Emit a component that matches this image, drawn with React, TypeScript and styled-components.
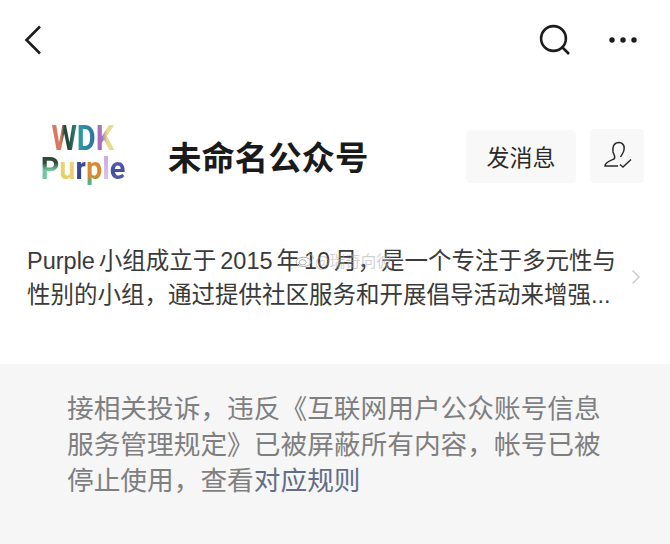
import styled, { createGlobalStyle } from "styled-components";

const GlobalStyle = createGlobalStyle`
  html, body {
    margin: 0;
    padding: 0;
    background: #fff;
  }
  body {
    font-family: "Liberation Sans", "Noto Sans CJK SC", sans-serif;
  }
`;

const LOGO_TOP = [
  { ch: "W", fill: "90deg, #d9775f 0%, #d9775f 38%, #24483c 50%, #24483c 66%, #2f8f88 100%" },
  { ch: "D", fill: "90deg, #2a9fa6 0%, #2f6f9f 100%" },
  { ch: "K", fill: "90deg, #a86fc0 0%, #a86fc0 35%, #e8dc8a 60%, #e8dc8a 100%" },
];

const LOGO_BOTTOM = [
  { ch: "P", fill: "180deg, #2d4a3a 0%, #2d4a3a 25%, #6fc8a0 45%, #6fc8a0 100%" },
  { ch: "u", fill: "180deg, #e8d880 0%, #e8c860 100%" },
  { ch: "r", fill: "180deg, #3f4f9f 0%, #2f3f80 100%" },
  { ch: "p", fill: "180deg, #d98a30 0%, #d98a30 60%, #4fb080 75%, #6fc8a0 100%" },
  { ch: "l", fill: "180deg, #c8a8e0 0%, #e0d0ec 100%" },
  { ch: "e", fill: "180deg, #7a5fc0 0%, #3f4f9f 50%, #8a6fd0 100%" },
];

export default function App() {
  return (
    <Page>
      <GlobalStyle />
      <NavBar>
        <IconButton aria-label="返回">
          <svg width="20" height="32" viewBox="0 0 20 32" fill="none">
            <path d="M17 2.5 L3.5 16 L17 29.5" stroke="#1c1c1c" strokeWidth="2.6" />
          </svg>
        </IconButton>
        <NavActions>
          <IconButton aria-label="搜索">
            <svg width="32" height="32" viewBox="0 0 32 32" fill="none">
              <circle cx="14.5" cy="14.5" r="12.4" stroke="#1c1c1c" strokeWidth="2.6" />
              <path d="M23.5 23.5 L30 30" stroke="#1c1c1c" strokeWidth="2.6" />
            </svg>
          </IconButton>
          <IconButton aria-label="更多">
            <svg width="30" height="8" viewBox="0 0 30 8">
              <circle cx="4" cy="4" r="2.7" fill="#1c1c1c" />
              <circle cx="15" cy="4" r="2.7" fill="#1c1c1c" />
              <circle cx="26" cy="4" r="2.7" fill="#1c1c1c" />
            </svg>
          </IconButton>
        </NavActions>
      </NavBar>

      <ProfileRow>
        <Logo>
          <LogoTop>
            {LOGO_TOP.map((l) => (
              <LogoLetter key={l.ch} $fill={l.fill}>{l.ch}</LogoLetter>
            ))}
          </LogoTop>
          <LogoBottom>
            {LOGO_BOTTOM.map((l) => (
              <LogoLetter key={l.ch} $fill={l.fill}>{l.ch}</LogoLetter>
            ))}
          </LogoBottom>
        </Logo>
        <Title>未命名公众号</Title>
        <MessageButton>发消息</MessageButton>
        <FollowButton aria-label="已关注">
          <svg width="30" height="30" viewBox="0 0 30 30" fill="none" stroke="#2a2a2a" strokeWidth="1.5">
            <path d="M16 25 H3 C3 21 8 19.5 12 18 C14 16 12 14 11 11 C10 6 12 1.5 17 1.5 C21 1.5 23 5 22 9 C21.5 12 19.5 14 18.5 16" />
            <path d="M18 23.5 L21 26 L29 18.5" />
          </svg>
        </FollowButton>
      </ProfileRow>

      <Description>
        <DescriptionText>
          <TightLine>Purple 小组成立于 2015 年 10 月，是一个专注于多元性与</TightLine>
          <TextLine>性别的小组，通过提供社区服务和开展倡导活动来增强...</TextLine>
        </DescriptionText>
        <svg width="10" height="16" viewBox="0 0 10 16" fill="none">
          <path d="M1.5 1.5 L8 8 L1.5 14.5" stroke="#cfcfcf" strokeWidth="1.6" />
        </svg>
        <Watermark>
          <svg width="20" height="16" viewBox="0 0 26 20" fill="none" stroke="#a8a8a8" strokeWidth="1.2">
            <ellipse cx="11" cy="12.5" rx="9.5" ry="6" />
            <ellipse cx="10" cy="13" rx="4.5" ry="3.4" />
            <path d="M17 2.5 C21 1.5 24.5 5 23.5 9" />
          </svg>
          <span>@瑞奇向彼</span>
        </Watermark>
      </Description>

      <Notice>
        <TextLine>接相关投诉，违反《互联网用户公众账号信息</TextLine>
        <TextLine>服务管理规定》已被屏蔽所有内容，帐号已被</TextLine>
        <TextLine>
          停止使用，查看<NoticeLink>对应规则</NoticeLink>
        </TextLine>
      </Notice>
    </Page>
  );
}

const Page = styled.div`
  width: 670px;
  height: 544px;
  display: flex;
  flex-direction: column;
  overflow: hidden;
  background: #fff;
`;

const NavBar = styled.div`
  height: 80px;
  padding: 0 32px 0 23px;
  display: flex;
  align-items: center;
  justify-content: space-between;
  flex: none;
`;

const NavActions = styled.div`
  display: flex;
  align-items: center;
  gap: 37px;
`;

const IconButton = styled.div`
  display: flex;
  align-items: center;
  justify-content: center;
`;

const ProfileRow = styled.div`
  margin-top: 45px;
  height: 66px;
  padding-left: 30px;
  display: flex;
  align-items: center;
  flex: none;
`;

const Logo = styled.div`
  width: 106px;
  height: 66px;
  margin-right: 32px;
  display: flex;
  flex-direction: column;
  align-items: center;
  filter: blur(0.5px);
  font-family: Roboto, sans-serif;
  font-weight: 700;
`;

const LogoTop = styled.div`
  display: flex;
  justify-content: center;
  font-size: 35px;
  line-height: 28px;
  height: 28px;
  transform: scaleX(0.83);
`;

const LogoBottom = styled.div`
  display: flex;
  justify-content: center;
  font-size: 32px;
  line-height: 30px;
  height: 38px;
  transform: scaleX(0.9);

  > span {
    padding-bottom: 8px;
  }
`;

const LogoLetter = styled.span<{ $fill: string }>`
  background: linear-gradient(${(p) => p.$fill});
  -webkit-background-clip: text;
  background-clip: text;
  color: transparent;
`;

const Title = styled.h1`
  margin: -4px 0 0;
  width: 298px;
  font-size: 33.4px;
  line-height: 44px;
  font-weight: 700;
  color: #1a1a1a;
  font-family: "Noto Sans CJK SC", sans-serif;
`;

const MessageButton = styled.div`
  width: 110px;
  height: 53px;
  margin-top: -4px;
  background: #f8f8f8;
  border-radius: 4px;
  display: flex;
  align-items: center;
  justify-content: center;
  font-size: 23px;
  color: #2a2a2a;
  font-family: "Noto Sans CJK SC", sans-serif;
`;

const FollowButton = styled.div`
  width: 54px;
  height: 54px;
  margin: -4px 0 0 14px;
  background: #f8f8f8;
  border-radius: 4px;
  display: flex;
  align-items: center;
  justify-content: center;
`;

const Description = styled.div`
  position: relative;
  margin-top: 51px;
  height: 122px;
  padding: 0 29px 0 27px;
  display: flex;
  justify-content: space-between;
  align-items: flex-start;
  flex: none;

  > svg {
    margin-top: 27px;
  }
`;

const DescriptionText = styled.div`
  padding-top: 2px;
  font-size: 23.5px;
  line-height: 34px;
  color: #3a3a3a;
  white-space: nowrap;
`;

const TextLine = styled.div`
  white-space: nowrap;
`;

const TightLine = styled(TextLine)`
  word-spacing: -2.6px;
`;

const Watermark = styled.div`
  position: absolute;
  left: 295px;
  top: 7px;
  display: flex;
  align-items: center;
  font-size: 15.5px;
  line-height: 22px;
  color: rgba(170, 170, 170, 0.55);
  font-family: "Noto Sans CJK SC", sans-serif;
`;

const Notice = styled.div`
  flex: 1;
  background: #f6f6f7;
  padding: 25px 0 0 67px;
  font-size: 26.7px;
  line-height: 36px;
  color: #7f7f7f;
  font-family: "Noto Sans CJK SC", sans-serif;
`;

const NoticeLink = styled.span`
  color: #626e88;
`;
